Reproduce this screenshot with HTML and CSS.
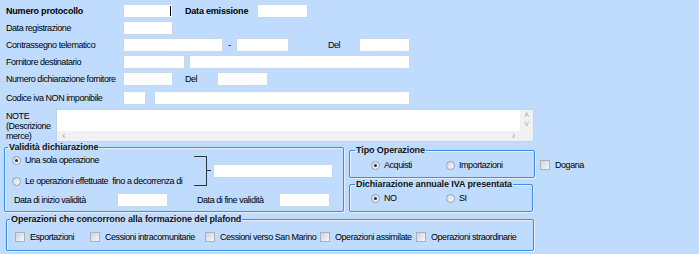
FILE: index.html
```html
<!DOCTYPE html>
<html lang="it">
<head>
    <meta charset="UTF-8">
    <title>Dichiarazione d'intento</title>
    <link rel="stylesheet" href="styles.css">
</head>
<body>
    <div class="page">
        <div class="row">
            <span class="lbl bold">Numero protocollo</span>
            <span class="box w50 caret-box"><span class="caret"></span></span>
            <span class="lbl-emis bold">Data emissione</span>
            <span class="box w51"></span>
        </div>
        <div class="row">
            <span class="lbl">Data registrazione</span>
            <span class="box w50"></span>
        </div>
        <div class="row">
            <span class="lbl">Contrassegno telematico</span>
            <span class="box w100"></span>
            <span class="dash">-</span>
            <span class="box w53"></span>
            <span class="lbl-del-far">Del</span>
            <span class="box w51"></span>
        </div>
        <div class="row">
            <span class="lbl">Fornitore destinatario</span>
            <span class="box w62"></span>
            <span class="box w221 ml4"></span>
        </div>
        <div class="row">
            <span class="lbl">Numero dichiarazione fornitore</span>
            <span class="box w50"></span>
            <span class="lbl-del">Del</span>
            <span class="box w51"></span>
        </div>
        <div class="row row-last">
            <span class="lbl">Codice iva NON imponibile</span>
            <span class="box w23"></span>
            <span class="box w256 ml8"></span>
        </div>

        <div class="note">
            <span class="note-lbl">NOTE<br>(Descrizione<br>merce)</span>
            <div class="textarea">
                <div class="ta-text"></div>
                <div class="ta-vscroll"><span>&#708;</span><span>&#709;</span></div>
                <div class="ta-hscroll"><span>&lsaquo;</span><span>&rsaquo;</span></div>
                <div class="ta-corner"></div>
            </div>
        </div>

        <div class="groups">
            <fieldset class="validita">
                <legend>Validità dichiarazione</legend>
                <div class="val-top">
                    <div class="val-options">
                        <label class="opt"><span class="radio on"></span>Una sola operazione</label>
                        <label class="opt"><span class="radio"></span>Le operazioni effettuate&nbsp; fino a decorrenza di</label>
                    </div>
                    <span class="bracket"></span>
                    <span class="box w120"></span>
                </div>
                <div class="val-dates">
                    <span class="lbl-inizio">Data di inizio validità</span>
                    <span class="box w51"></span>
                    <span class="lbl-fine">Data di fine validità</span>
                    <span class="box w51"></span>
                </div>
            </fieldset>

            <div class="side">
                <div class="tipo-row">
                    <fieldset class="tipo">
                        <legend>Tipo Operazione</legend>
                        <div class="radios">
                            <label class="opt pair"><span class="radio on"></span>Acquisti</label>
                            <label class="opt"><span class="radio"></span>Importazioni</label>
                        </div>
                    </fieldset>
                    <label class="opt dogana"><span class="check"></span>Dogana</label>
                </div>
                <fieldset class="annuale">
                    <legend>Dichiarazione annuale IVA presentata</legend>
                    <div class="radios">
                        <label class="opt pair"><span class="radio on"></span>NO</label>
                        <label class="opt"><span class="radio"></span>SI</label>
                    </div>
                </fieldset>
            </div>
        </div>

        <fieldset class="plafond">
            <legend>Operazioni che concorrono alla formazione del plafond</legend>
            <div class="checks">
                <label class="opt c1"><span class="check"></span>Esportazioni</label>
                <label class="opt c2"><span class="check"></span>Cessioni intracomunitarie</label>
                <label class="opt c3"><span class="check"></span>Cessioni verso San Marino</label>
                <label class="opt c4"><span class="check"></span>Operazioni assimilate</label>
                <label class="opt"><span class="check"></span>Operazioni straordinarie</label>
            </div>
        </fieldset>
    </div>
</body>
</html>
```

FILE: styles.css
```css
body {
    margin: 0;
    background-color: #bfdbfe;
    font-family: "Liberation Sans", Arial, sans-serif;
    font-size: 9px;
    letter-spacing: -0.45px;
    color: #000;
}

.page {
    width: 699px;
    height: 254px;
    padding: 4px 0 0 6px;
    box-sizing: border-box;
    overflow: hidden;
}

.bold {
    font-weight: bold;
    letter-spacing: -0.2px;
}

/* testata */
.row {
    display: flex;
    align-items: center;
    height: 14px;
    margin-bottom: 3px;
    white-space: nowrap;
}

.row-last {
    margin-top: 5px;
}

.lbl {
    width: 117px;
}

.lbl-emis {
    width: 72px;
    margin-left: 12px;
}

.lbl-del {
    width: 32px;
    margin-left: 12px;
}

.lbl-del-far {
    width: 31px;
    margin-left: 39px;
}

.dash {
    width: 13px;
    text-align: center;
}

.box {
    display: inline-block;
    height: 14px;
    box-sizing: border-box;
    background: #fff;
    border: 1px solid #c9d7ea;
    flex-shrink: 0;
}

.w23 { width: 23px; }
.w50 { width: 50px; }
.w51 { width: 51px; }
.w53 { width: 53px; }
.w62 { width: 62px; }
.w100 { width: 100px; }
.w120 { width: 120px; }
.w221 { width: 221px; }
.w256 { width: 256px; }
.ml4 { margin-left: 4px; }
.ml8 { margin-left: 8px; }

.caret-box {
    display: flex;
    align-items: center;
    justify-content: flex-end;
    padding-right: 1px;
}

.caret {
    width: 1px;
    height: 10px;
    background: #000;
}

/* note */
.note {
    display: flex;
    margin-top: 4px;
}

.note-lbl {
    width: 50px;
    line-height: 10px;
    padding-top: 2px;
    white-space: nowrap;
}

.textarea {
    width: 478px;
    height: 33px;
    box-sizing: border-box;
    border: 1px solid #c6d3e4;
    display: grid;
    grid-template-columns: 1fr 13px;
    grid-template-rows: 1fr 10px;
    background: #fff;
}

.ta-vscroll,
.ta-hscroll,
.ta-corner {
    background: #f0f1f3;
    color: #a4a9b0;
    font-size: 9px;
    line-height: 9px;
}

.ta-vscroll {
    display: flex;
    flex-direction: column;
    align-items: center;
    padding-top: 1px;
}

.ta-hscroll {
    display: flex;
    justify-content: space-between;
    padding: 0 5px;
    font-size: 11px;
}

/* gruppi */
fieldset {
    margin: 0;
    padding: 0 0 0 5px;
    min-width: 0;
    box-sizing: border-box;
    border: 1px solid #3d8cf2;
    border-radius: 2px;
    box-shadow: inset 1px 1px 0 #e4efff, 1px 1px 0 #e4efff;
}

legend {
    font-weight: bold;
    letter-spacing: -0.1px;
    line-height: 10px;
    padding: 0 1px;
    color: #111;
    white-space: nowrap;
}

.opt {
    display: flex;
    align-items: center;
    height: 14px;
    white-space: nowrap;
}

.radio {
    position: relative;
    flex-shrink: 0;
    width: 9px;
    height: 9px;
    margin-right: 4px;
    box-sizing: border-box;
    border: 1px solid #97a3b3;
    border-radius: 50%;
    background: linear-gradient(135deg, #d3d7dd, #fbfbfc);
}

.radio.on::after {
    content: "";
    position: absolute;
    left: 2px;
    top: 2px;
    width: 3px;
    height: 3px;
    border-radius: 50%;
    background: #2b2f36;
}

.check {
    flex-shrink: 0;
    width: 8px;
    height: 8px;
    margin-right: 5px;
    border: 1px solid #a8b2bf;
    background: linear-gradient(135deg, #cfd4da, #f7f8f9);
}

.groups {
    display: flex;
    align-items: flex-start;
    margin-left: -2px;
}

.validita {
    width: 340px;
    padding-left: 3px;
    padding-top: 1px;
    padding-bottom: 4px;
}

.val-top {
    display: flex;
    align-items: center;
    margin-left: 4px;
}

.val-options {
    width: 182px;
    display: flex;
    flex-direction: column;
    gap: 7px;
}

.bracket {
    position: relative;
    flex-shrink: 0;
    width: 12px;
    height: 28px;
    border: 1px solid #2c3340;
    border-left: none;
}

.bracket::after {
    content: "";
    position: absolute;
    right: -5px;
    top: 13px;
    width: 4px;
    height: 1px;
    background: #2c3340;
}

.val-top .w120 {
    margin-left: 6px;
}

.val-dates {
    display: flex;
    align-items: center;
    margin-top: 5px;
    margin-left: 6px;
    white-space: nowrap;
}

.lbl-inizio {
    width: 103px;
}

.lbl-fine {
    width: 82px;
    margin-left: 29px;
}

.side {
    margin-left: 5px;
}

.tipo-row {
    display: flex;
    align-items: flex-start;
    margin-top: 3px;
}

.tipo {
    width: 186px;
    padding-top: 3px;
    padding-bottom: 5px;
}

.radios {
    display: flex;
    margin-left: 16px;
}

.pair {
    width: 75px;
}

.dogana {
    margin-left: 5px;
    margin-top: 13px;
}

.annuale {
    width: 184px;
    margin-top: 1px;
    padding-top: 2px;
    padding-bottom: 6px;
}

.plafond {
    width: 528px;
    margin-top: 2px;
    padding-left: 3px;
    padding-top: 6px;
    padding-bottom: 6px;
}

.checks {
    display: flex;
    margin-left: 5px;
}

.c1 { width: 75px; }
.c2 { width: 115px; }
.c3 { width: 115px; }
.c4 { width: 96px; }
```
